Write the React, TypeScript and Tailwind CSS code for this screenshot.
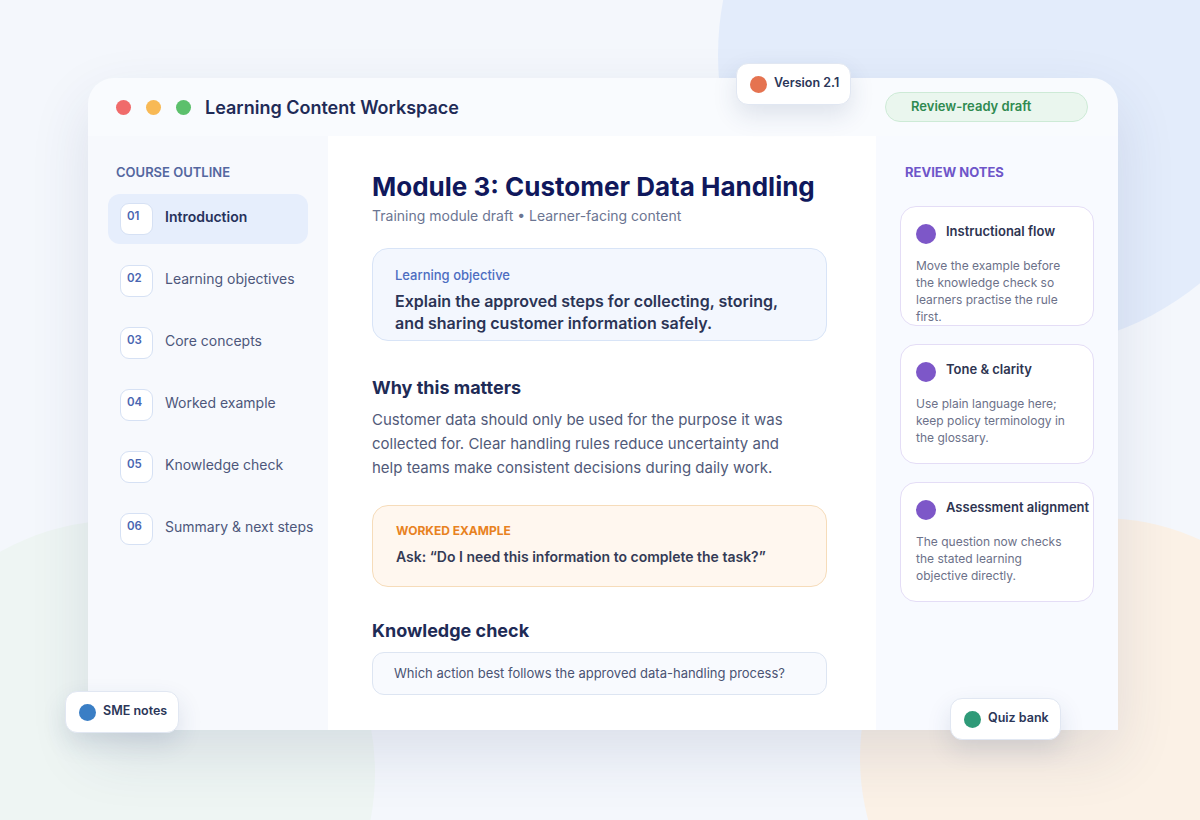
import React from "react";

const outline = [
  { n: "01", label: "Introduction", active: true },
  { n: "02", label: "Learning objectives" },
  { n: "03", label: "Core concepts" },
  { n: "04", label: "Worked example" },
  { n: "05", label: "Knowledge check" },
  { n: "06", label: "Summary & next steps" },
];

const notes = [
  {
    title: "Instructional flow",
    body: "Move the example before the knowledge check so learners practise the rule first.",
  },
  {
    title: "Tone & clarity",
    body: "Use plain language here; keep policy terminology in the glossary.",
  },
  {
    title: "Assessment alignment",
    body: "The question now checks the stated learning objective directly.",
  },
];

function Chip({ color, label, className }: { color: string; label: string; className: string }) {
  return (
    <div
      className={
        "absolute flex items-center gap-[7px] h-[42px] px-[13px] rounded-[12px] bg-white border border-[#e1e7f2] shadow-[0_10px_24px_rgba(40,60,110,0.13)] whitespace-nowrap " +
        className
      }
    >
      <span className={"w-[17px] h-[17px] rounded-full shrink-0 " + color} />
      <span className="text-[12.5px] font-semibold text-[#2b3658] -mt-[2px]">{label}</span>
    </div>
  );
}

export default function App() {
  return (
    <div
      className="relative w-[1200px] h-[820px] overflow-hidden bg-[#f4f7fc]"
      style={{ fontFamily: "Inter, 'Noto Sans', sans-serif" }}
    >
      {/* decorative background circles */}
      <div className="absolute left-[718px] top-[-240px] w-[590px] h-[590px] rounded-full bg-[#e3ecfb]" />
      <div className="absolute left-[-130px] top-[520px] w-[505px] h-[505px] rounded-full bg-[#eef5f3]" />
      <div className="absolute left-[860px] top-[518px] w-[480px] h-[480px] rounded-full bg-[#fbf1e6]" />

      <div className="relative pt-[78px] pl-[88px]">
        <div className="w-[1030px] h-[652px] flex flex-col rounded-t-[26px] overflow-hidden bg-[#f9fbfe] shadow-[0_24px_60px_rgba(40,60,110,0.12)]">
          {/* header */}
          <div className="h-[58px] flex items-center pl-[28px] pr-[30px] shrink-0">
            <div className="flex items-center gap-[15px]">
              <span className="w-[15px] h-[15px] rounded-full bg-[#f06b6b]" />
              <span className="w-[15px] h-[15px] rounded-full bg-[#f8b955]" />
              <span className="w-[15px] h-[15px] rounded-full bg-[#5cc06c]" />
            </div>
            <div className="ml-[14px] text-[18px] font-semibold text-[#1f2b57]">Learning Content Workspace</div>
            <div className="ml-auto w-[203px] h-[30px] flex items-center pl-[25px] rounded-full bg-[#eaf6ee] border border-[#cdead6] text-[13px] font-semibold text-[#2f8a50]">
              Review-ready draft
            </div>
          </div>

          {/* body */}
          <div className="flex flex-1 min-h-0">
            {/* sidebar */}
            <div className="w-[240px] shrink-0 bg-[#f7f9fd] px-5 pt-[28px]">
              <div className="ml-2 text-[13px] font-semibold text-[#54679f] leading-[17px]">COURSE OUTLINE</div>
              <div className="mt-[13px] flex flex-col gap-[12px]">
                {outline.map((o) => (
                  <div
                    key={o.n}
                    className={
                      "h-[50px] flex items-center px-3 rounded-[12px] " + (o.active ? "bg-[#e6eefc]" : "")
                    }
                  >
                    <div className="w-[33px] h-[32px] shrink-0 rounded-[9px] bg-white border border-[#d6e1f4] pl-[6px] pt-[5px] text-[11.5px] leading-[14px] font-semibold text-[#4a66b1]">
                      {o.n}
                    </div>
                    <div
                      className={
                        "ml-3 text-[14px] whitespace-nowrap -mt-[6px] " +
                        (o.active ? "font-semibold text-[#27325b]" : "text-[#4d577b]")
                      }
                    >
                      {o.label}
                    </div>
                  </div>
                ))}
              </div>
            </div>

            {/* main */}
            <div className="w-[548px] shrink-0 bg-white pl-[44px] pr-[49px] pt-[35px]">
              <div className="text-[26px] leading-[32px] font-bold text-[#10185c] whitespace-nowrap">
                Module 3: Customer Data Handling
              </div>
              <div className="mt-[3px] text-[14px] leading-[20px] text-[#6b7592]">
                Training module draft • Learner-facing content
              </div>

              <div className="mt-[22px] h-[93px] rounded-[16px] bg-[#f3f7fe] border border-[#d8e4f7] px-[22px] pt-[17px]">
                <div className="text-[13px] leading-[18px] font-medium text-[#4d6dc1]">Learning objective</div>
                <div className="mt-[6px] text-[16px] leading-[22px] font-semibold text-[#2b3455]">
                  Explain the approved steps for collecting, storing, and sharing customer information safely.
                </div>
              </div>

              <div className="mt-[35px] text-[18px] leading-[24px] font-bold text-[#1e2b56]">Why this matters</div>
              <div className="mt-[8px] w-[420px] text-[15px] leading-[24px] text-[#515a79]">
                Customer data should only be used for the purpose it was collected for. Clear handling rules reduce
                uncertainty and help teams make consistent decisions during daily work.
              </div>

              <div className="mt-[25px] h-[82px] rounded-[16px] bg-[#fff7ef] border border-[#f6dcba] px-[23px] pt-[17px]">
                <div className="text-[12px] leading-[16px] font-bold text-[#e8821f]">WORKED EXAMPLE</div>
                <div className="mt-[8px] text-[14px] leading-[20px] font-semibold text-[#343b56]">
                  Ask: “Do I need this information to complete the task?”
                </div>
              </div>

              <div className="mt-[32px] text-[18px] leading-[24px] font-bold text-[#1e2b56]">Knowledge check</div>
              <div className="mt-[9px] h-[43px] flex items-center rounded-[12px] bg-[#f8fafe] border border-[#dde5f2] px-[21px] text-[13px] text-[#4a5373] whitespace-nowrap">
                Which action best follows the approved data-handling process?
              </div>
            </div>

            {/* review notes */}
            <div className="w-[242px] shrink-0 min-w-0 bg-[#f8faff] px-6 pt-[28px]">
              <div className="ml-[5px] text-[13px] leading-[17px] font-bold text-[#6e55c9]">REVIEW NOTES</div>
              <div className="mt-[25px] flex flex-col gap-[18px]">
                {notes.map((n) => (
                  <div
                    key={n.title}
                    className="h-[120px] overflow-hidden rounded-[16px] bg-white border border-[#e4ddf6] px-[15px] pt-[17px]"
                  >
                    <div className="flex items-start">
                      <span className="w-[20px] h-[20px] rounded-full bg-[#7d57c8] shrink-0" />
                      <span className="ml-[10px] -mt-[1px] text-[13px] leading-[16px] font-semibold text-[#2e3451] whitespace-nowrap">
                        {n.title}
                      </span>
                    </div>
                    <div className="mt-[13px] w-[155px] text-[12px] leading-[17px] text-[#6c7189]">{n.body}</div>
                  </div>
                ))}
              </div>
            </div>
          </div>
        </div>

        <Chip color="bg-[#e57350]" label="Version 2.1" className="left-[736px] top-[63px] w-[115px]" />
        <Chip color="bg-[#3a7ec5]" label="SME notes" className="left-[65px] top-[691px] w-[114px]" />
        <Chip color="bg-[#2f9a78]" label="Quiz bank" className="left-[950px] top-[698px] w-[111px]" />
      </div>
    </div>
  );
}
